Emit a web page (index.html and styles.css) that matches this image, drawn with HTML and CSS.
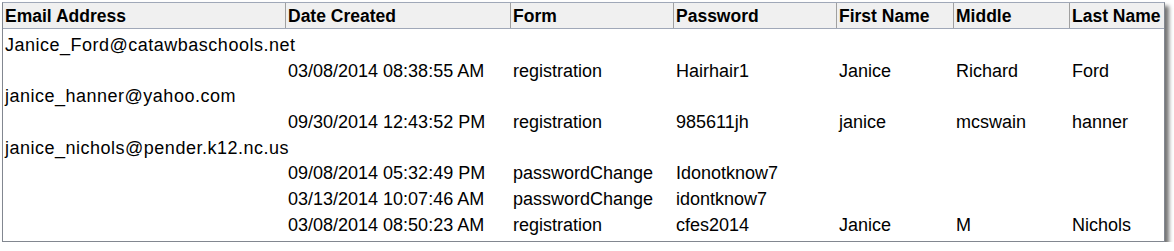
FILE: index.html
```html
<!DOCTYPE html>
<html lang="en">
<head>
    <meta charset="UTF-8">
    <title>Registrations</title>
    <link rel="stylesheet" href="styles.css">
</head>
<body>
    <div class="grid-box">
        <div class="grid head">
            <div class="col">Email Address</div>
            <div class="col">Date Created</div>
            <div class="col">Form</div>
            <div class="col">Password</div>
            <div class="col">First Name</div>
            <div class="col">Middle</div>
            <div class="col last">Last Name</div>
        </div>

        <div class="rows">
            <div class="group">Janice_Ford@catawbaschools.net</div>
            <div class="grid row">
                <div></div>
                <div>03/08/2014 08:38:55 AM</div>
                <div>registration</div>
                <div>Hairhair1</div>
                <div>Janice</div>
                <div>Richard</div>
                <div>Ford</div>
            </div>

            <div class="group">janice_hanner@yahoo.com</div>
            <div class="grid row">
                <div></div>
                <div>09/30/2014 12:43:52 PM</div>
                <div>registration</div>
                <div>985611jh</div>
                <div>janice</div>
                <div>mcswain</div>
                <div>hanner</div>
            </div>

            <div class="group">janice_nichols@pender.k12.nc.us</div>
            <div class="grid row">
                <div></div>
                <div>09/08/2014 05:32:49 PM</div>
                <div>passwordChange</div>
                <div>Idonotknow7</div>
                <div></div>
                <div></div>
                <div></div>
            </div>
            <div class="grid row">
                <div></div>
                <div>03/13/2014 10:07:46 AM</div>
                <div>passwordChange</div>
                <div>idontknow7</div>
                <div></div>
                <div></div>
                <div></div>
            </div>
            <div class="grid row">
                <div></div>
                <div>03/08/2014 08:50:23 AM</div>
                <div>registration</div>
                <div>cfes2014</div>
                <div>Janice</div>
                <div>M</div>
                <div>Nichols</div>
            </div>
        </div>
    </div>
</body>
</html>
```

FILE: styles.css
```css
body {
    margin: 0;
    padding: 2px 0 0 2px;
    background: #fff;
    font-family: "Liberation Sans", Arial, sans-serif;
    color: #000;
}

.grid-box {
    width: 1161px;
    height: 238px;
    border: 1px solid #828790;
    border-top-color: #a0a8b8;
    background: #fff;
    box-shadow: 4px 4px 4px rgba(0,0,0,0.55);
    overflow: hidden;
}

.grid {
    display: grid;
    grid-template-columns: 283px 225px 163px 163px 117px 116px 1fr;
}

.head {
    height: 25px;
    background: #f0f0f0;
    border-bottom: 1px solid #a0a8b8;
    font-size: 17.5px;
    font-weight: bold;
}

.head .col {
    line-height: 26px;
    padding-left: 2px;
    border-right: 1px solid #a0a0a0;
    white-space: nowrap;
    overflow: hidden;
}

.head .last {
    border-right: none;
}

.rows {
    padding-top: 4px;
}

.group,
.row {
    font-size: 18px;
    height: 25.7px;
    line-height: 25.7px;
    white-space: nowrap;
}

.group {
    padding-left: 2px;
    letter-spacing: 0.5px;
}

.row div {
    padding-left: 2px;
}
```
